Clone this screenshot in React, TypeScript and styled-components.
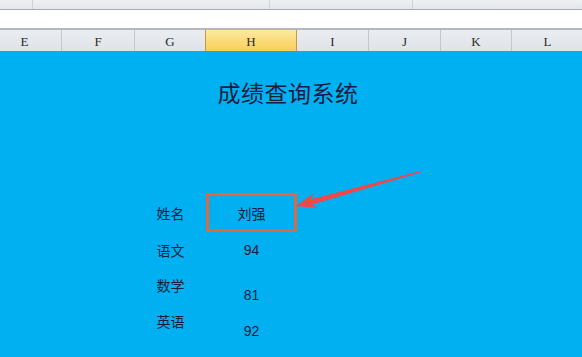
import React from 'react';
import styled, { createGlobalStyle } from 'styled-components';

const GlobalStyle = createGlobalStyle`
  html, body {
    margin: 0;
    padding: 0;
    width: 582px;
    height: 357px;
    overflow: hidden;
    background: #00b0f0;
  }
`;

const columns = '74px 73px 71px 91px 72px 72px 71px 72px';

const Page = styled.div`
  position: relative;
  width: 582px;
  height: 357px;
  overflow: hidden;
  display: flex;
  flex-direction: column;
`;

const TopStrip = styled.div`
  height: 9px;
  background: linear-gradient(#eef0f3, #e3e6ea);
  border-bottom: 1px solid #a8acb0;
  display: grid;
  grid-template-columns: 33px 237px 143px 1fr;
  > div {
    border-right: 1px solid #cfd3d8;
  }
  > div:last-child {
    border-right: none;
  }
`;

const FormulaBar = styled.div`
  height: 18px;
  background: #ffffff;
  border-bottom: 2px solid #b4b8bc;
`;

const HeaderRow = styled.div`
  display: grid;
  grid-template-columns: ${columns};
  margin-left: -12px;
  height: 21px;
  background: linear-gradient(#eaedf1, #dfe3e8);
`;

const HeaderCell = styled.div<{ $active?: boolean }>`
  display: flex;
  align-items: center;
  justify-content: center;
  padding-top: 2px;
  font-family: 'Liberation Serif', 'DejaVu Serif', serif;
  font-size: 13px;
  color: #2a2a2a;
  border-right: 1px solid ${p => (p.$active ? '#c79b3b' : '#c3c8ce')};
  border-left: ${p => (p.$active ? '1px solid #c79b3b' : 'none')};
  margin-left: ${p => (p.$active ? '-1px' : '0')};
  background: ${p => (p.$active ? 'linear-gradient(#fde9a0, #f9cf58)' : 'transparent')};
`;

const Sheet = styled.div`
  flex: 1;
  background: #00b0f0;
  color: #14203c;
  font-family: 'Noto Sans CJK SC', 'Liberation Sans', sans-serif;
`;

const Title = styled.h1`
  margin: 0;
  padding: 28px 6px 0 0;
  height: 142px;
  box-sizing: border-box;
  text-align: center;
  font-size: 23px;
  font-weight: 400;
  line-height: 26px;
  letter-spacing: 0.5px;
`;

const Row = styled.div<{ $h: number }>`
  display: grid;
  grid-template-columns: ${columns};
  margin-left: -12px;
  height: ${p => p.$h}px;
`;

const Label = styled.div`
  grid-column: 3;
  display: flex;
  align-items: center;
  justify-content: center;
  font-size: 14px;
`;

const Value = styled.div<{ $boxed?: boolean; $bottom?: boolean }>`
  grid-column: 4;
  display: flex;
  align-items: ${p => (p.$bottom ? 'flex-end' : 'center')};
  justify-content: center;
  box-sizing: border-box;
  font-family: 'Liberation Sans', 'Noto Sans CJK SC', sans-serif;
  font-size: 14px;
  border: ${p => (p.$boxed ? '3px solid #e0683c' : 'none')};
`;

const NameText = styled.span`
  font-family: 'Noto Sans CJK SC', sans-serif;
`;

const Arrow = styled.svg`
  position: absolute;
  left: 0;
  top: 0;
  pointer-events: none;
`;

const headers = ['E', 'F', 'G', 'H', 'I', 'J', 'K', 'L'];

const rows = [
  { label: '语文', value: '94', h: 35, bottom: false },
  { label: '数学', value: '81', h: 36, bottom: true },
  { label: '英语', value: '92', h: 36, bottom: true },
];

const App: React.FC = () => {
  return (
    <Page>
      <GlobalStyle />
      <TopStrip>
        <div />
        <div />
        <div />
        <div />
      </TopStrip>
      <FormulaBar />
      <HeaderRow>
        {headers.map(h => (
          <HeaderCell key={h} $active={h === 'H'}>{h}</HeaderCell>
        ))}
      </HeaderRow>
      <Sheet>
        <Title>成绩查询系统</Title>
        <Row $h={39}>
          <Label>姓名</Label>
          <Value $boxed><NameText>刘强</NameText></Value>
        </Row>
        {rows.map(r => (
          <Row key={r.label} $h={r.h}>
            <Label>{r.label}</Label>
            <Value $bottom={r.bottom}>{r.value}</Value>
          </Row>
        ))}
      </Sheet>
      <Arrow width="582" height="357" viewBox="0 0 582 357">
        <polygon
          points="296,206 313.5,193.5 311,199.3 420,171.3 420.4,172.6 312.2,204.4 317.5,208"
          fill="#f04848"
        />
      </Arrow>
    </Page>
  );
};

export default App;
